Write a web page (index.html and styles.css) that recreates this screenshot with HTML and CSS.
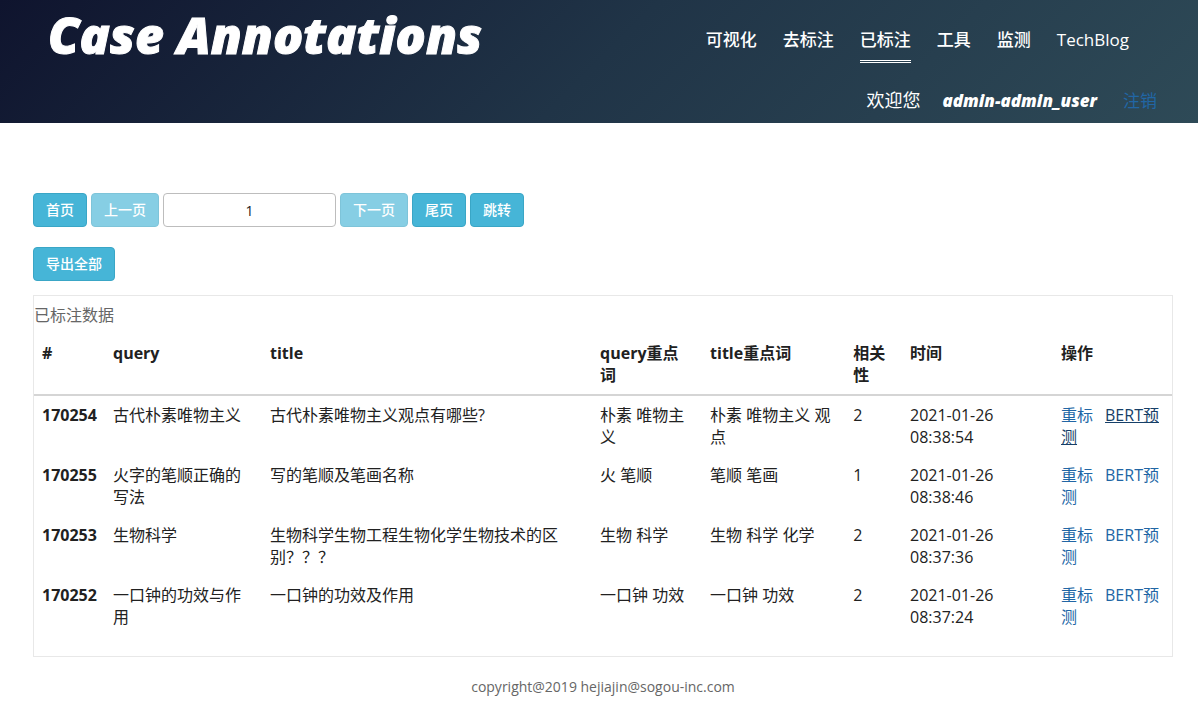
FILE: index.html
```html
<!DOCTYPE html>
<html lang="zh-CN">
<head>
<meta charset="utf-8">
<meta name="viewport" content="width=device-width, initial-scale=1">
<title>Case Annotations</title>
<link rel="stylesheet" href="styles.css">
</head>
<body>
<header class="header">
  <h1 class="brand">Case Annotations</h1>
  <div class="header-side">
    <nav class="nav">
      <a href="#">可视化</a>
      <a href="#">去标注</a>
      <a href="#" class="active" aria-current="page">已标注</a>
      <a href="#">工具</a>
      <a href="#">监测</a>
      <a href="#">TechBlog</a>
    </nav>
    <div class="user">
      <span class="welcome">欢迎您</span>
      <strong class="user-name">admin-admin_user</strong>
      <a href="#" class="logout">注销</a>
    </div>
  </div>
</header>
<main class="content">
  <form class="pager">
    <button type="button" class="btn">首页</button>
    <button type="button" class="btn" disabled>上一页</button>
    <input class="page-input" type="text" value="1" aria-label="页码">
    <button type="button" class="btn" disabled>下一页</button>
    <button type="button" class="btn">尾页</button>
    <button type="button" class="btn">跳转</button>
  </form>
  <div class="export">
    <button type="button" class="btn">导出全部</button>
  </div>
  <div class="panel">
    <table class="table">
      <caption>已标注数据</caption>
      <colgroup>
        <col class="col-id"><col class="col-query"><col class="col-title"><col class="col-qkey"><col class="col-tkey"><col class="col-rel"><col class="col-time"><col class="col-op">
      </colgroup>
      <thead>
        <tr><th scope="col">#</th><th scope="col">query</th><th scope="col">title</th><th scope="col">query重点词</th><th scope="col">title重点词</th><th scope="col">相关性</th><th scope="col">时间</th><th scope="col">操作</th></tr>
      </thead>
      <tbody>
        <tr><th scope="row">170254</th><td>古代朴素唯物主义</td><td>古代朴素唯物主义观点有哪些?</td><td>朴素 唯物主义</td><td>朴素 唯物主义 观点</td><td>2</td><td>2021-01-26 08:38:54</td><td><a href="#" class="redo">重标</a><a href="#" class="hovered">BERT预测</a></td></tr>
        <tr><th scope="row">170255</th><td>火字的笔顺正确的写法</td><td>写的笔顺及笔画名称</td><td>火 笔顺</td><td>笔顺 笔画</td><td>1</td><td>2021-01-26 08:38:46</td><td><a href="#" class="redo">重标</a><a href="#">BERT预测</a></td></tr>
        <tr><th scope="row">170253</th><td>生物科学</td><td>生物科学生物工程生物化学生物技术的区别？？？</td><td>生物 科学</td><td>生物 科学 化学</td><td>2</td><td>2021-01-26 08:37:36</td><td><a href="#" class="redo">重标</a><a href="#">BERT预测</a></td></tr>
        <tr><th scope="row">170252</th><td>一口钟的功效与作用</td><td>一口钟的功效及作用</td><td>一口钟 功效</td><td>一口钟 功效</td><td>2</td><td>2021-01-26 08:37:24</td><td><a href="#" class="redo">重标</a><a href="#">BERT预测</a></td></tr>
      </tbody>
    </table>
  </div>
  <footer class="footer">copyright@2019 hejiajin@sogou-inc.com</footer>
</main>
</body>
</html>
```
FILE: styles.css
```css
* {
  box-sizing: border-box;
}

body {
  margin: 0;
  background: #fff;
  color: #212121;
  font-family: "Open Sans", "Noto Sans CJK SC", sans-serif;
  font-size: 16px;
  line-height: 22px;
}

a {
  color: #2166a5;
  text-decoration: none;
}

.header {
  display: flex;
  justify-content: space-between;
  align-items: flex-start;
  padding: 8px 41px 11px 48px;
  background: linear-gradient(135deg, #0f142e 0%, #203447 50%, #2e4a57 100%);
  color: #fff;
}

.brand {
  margin: 0;
  font-family: "Open Sans", sans-serif;
  font-size: 50px;
  font-style: italic;
  font-weight: 800;
  line-height: 54px;
  -webkit-text-stroke: 1px #fff;
}

.header-side {
  display: flex;
  flex-direction: column;
  align-items: flex-end;
  gap: 26px;
  padding-top: 21px;
}

.nav {
  display: flex;
  gap: 26px;
  padding-right: 28px;
}

.nav a {
  padding-bottom: 9px;
  border-bottom: 3px double transparent;
  color: #fff;
  font-size: 17px;
  font-weight: 500;
  line-height: 22px;
}

.nav .active {
  border-bottom-color: #fff;
}

.user {
  display: flex;
  gap: 22px;
  font-size: 17px;
  line-height: 23px;
}

.welcome {
  font-size: 18px;
}

.user-name {
  font-style: italic;
  font-weight: 800;
}

.logout {
  padding-left: 4px;
}

.content {
  padding: 70px 25px 10px 33px;
}

.pager {
  display: flex;
  gap: 4px;
}

.btn {
  height: 34px;
  padding: 0 12px;
  border: 1px solid #3aa6c6;
  border-radius: 4px;
  background: #46b5d7;
  color: #fff;
  font: 500 14px/20px "Open Sans", "Noto Sans CJK SC", sans-serif;
}

.btn:disabled {
  opacity: 0.65;
}

.page-input {
  width: 173px;
  height: 34px;
  border: 1px solid #bdbdbd;
  border-radius: 4px;
  color: #212121;
  font: 14px/20px "Open Sans", "Noto Sans CJK SC", sans-serif;
  text-align: center;
}

.export {
  display: flex;
  padding: 20px 0 14px;
}

.panel {
  padding-bottom: 20px;
  border: 1px solid #e8e8e8;
}

.table {
  width: 100%;
  border-collapse: separate;
  border-spacing: 0;
  table-layout: fixed;
}

.table caption {
  padding: 8px 0;
  color: #666;
  text-align: left;
}

.table th,
.table td {
  padding: 8px;
  text-align: left;
  vertical-align: top;
}

.table thead th {
  border-bottom: 2px solid #d5d5d5;
}

.col-id { width: 6.24%; }
.col-query { width: 13.8%; }
.col-title { width: 29%; }
.col-qkey { width: 9.67%; }
.col-tkey { width: 12.57%; }
.col-rel { width: 5%; }
.col-time { width: 13.27%; }
.col-op { width: 10.45%; }

.redo {
  margin-right: 12px;
}

.hovered {
  color: #163f68;
  text-decoration: underline;
}

.footer {
  padding-top: 19px;
  color: #666;
  font-size: 14px;
  text-align: center;
}
```
